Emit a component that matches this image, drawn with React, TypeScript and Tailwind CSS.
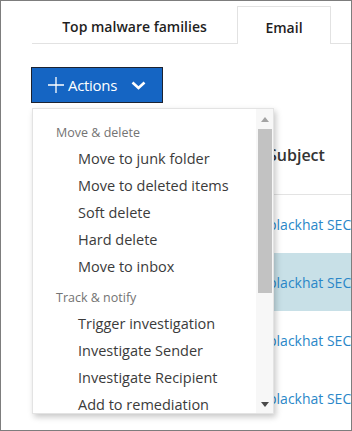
const font = { fontFamily: '"Segoe UI", "Open Sans", "Noto Sans", sans-serif' };

function MenuHeader({ label, first }: { label: string; first?: boolean }) {
  return (
    <div
      className={`pl-[23px] text-[12.5px] text-[#737373] leading-[24px] ${first ? "" : "pt-[6px]"}`}
    >
      {label}
    </div>
  );
}

function MenuItem({ label }: { label: string }) {
  return (
    <div className="pl-[45px] h-[27px] leading-[27px] text-[14.5px] text-[#3b3b3b] whitespace-nowrap">
      {label}
    </div>
  );
}

function ActionsMenu() {
  return (
    <div className="absolute left-[31px] top-[107px] w-[242px] h-[306px] bg-white border border-[#e3e3e3] shadow-[2px_3px_6px_rgba(0,0,0,0.22)] flex">
      <div className="flex-1 overflow-hidden pt-[12px]">
        <MenuHeader label="Move & delete" first />
        <MenuItem label="Move to junk folder" />
        <MenuItem label="Move to deleted items" />
        <MenuItem label="Soft delete" />
        <MenuItem label="Hard delete" />
        <MenuItem label="Move to inbox" />
        <MenuHeader label="Track & notify" />
        <MenuItem label="Trigger investigation" />
        <MenuItem label="Investigate Sender" />
        <MenuItem label="Investigate Recipient" />
        <MenuItem label="Add to remediation" />
      </div>
      <div className="w-[17px] flex flex-col items-center bg-[#f7f7f7]">
        <div className="h-[20px] flex items-center justify-center">
          <svg width="8" height="5" viewBox="0 0 8 5">
            <path d="M0 5 L4 0 L8 5 Z" fill="#a3a3a3" />
          </svg>
        </div>
        <div className="w-[14px] h-[164px] bg-[#c2c2c2]" />
        <div className="flex-1" />
        <div className="h-[16px] mb-[1px] flex items-center justify-center">
          <svg width="8" height="5" viewBox="0 0 8 5">
            <path d="M0 0 L8 0 L4 5 Z" fill="#4a4a4a" />
          </svg>
        </div>
      </div>
    </div>
  );
}

export default function App() {
  const rows = [false, true, false, false];
  return (
    <div
      className="w-[352px] h-[431px] border border-[#7d7d7d] bg-white relative overflow-hidden"
      style={font}
    >
      {/* tabs */}
      <div className="flex items-end mt-[5px] h-[38px]">
        <div className="w-[31px]" />
        <div className="w-[205px] h-[38px] pt-[3px] border-b border-[#e2e2e2] flex items-center justify-center text-[14px] font-semibold text-[#1f1f1f]">
          Top malware families
        </div>
        <div className="w-[94px] h-[38px] pt-[3px] border-l border-t border-r border-[#e2e2e2] flex items-center justify-center text-[14px] font-semibold text-[#1f1f1f]">
          Email
        </div>
        <div className="flex-1 h-[38px] border-b border-[#e2e2e2]" />
      </div>

      {/* actions button */}
      <div className="ml-[30px] mt-[23px] w-[132px] h-[36px] bg-[#1565c3] border border-[#1c2230] flex items-center text-white">
        <svg width="16" height="16" viewBox="0 0 16 16" className="ml-[16px]">
          <path d="M8 0 V16 M0 8 H16" stroke="white" strokeWidth="1.3" />
        </svg>
        <span className="ml-[4px] text-[15px] tracking-[-0.3px]">Actions</span>
        <svg width="15" height="9" viewBox="0 0 15 9" className="ml-[14px]">
          <path d="M1.5 1.5 L7.5 7 L13.5 1.5" stroke="white" strokeWidth="2.6" fill="none" />
        </svg>
      </div>

      {/* email table behind the menu */}
      <div className="pl-[267px] whitespace-nowrap overflow-hidden">
        <div className="h-[92px] pt-[34px] border-b border-[#e3e3e3] text-[16px] font-semibold text-[#333] leading-[36px]">
          Subject
        </div>
        {rows.map((hi, i) => (
          <div
            key={i}
            className={`h-[58px] flex items-center text-[14px] text-[#2a87c8] ${hi ? "bg-[#c8e0e7]" : ""}`}
          >
            blackhat SEC
          </div>
        ))}
      </div>

      <ActionsMenu />
    </div>
  );
}
